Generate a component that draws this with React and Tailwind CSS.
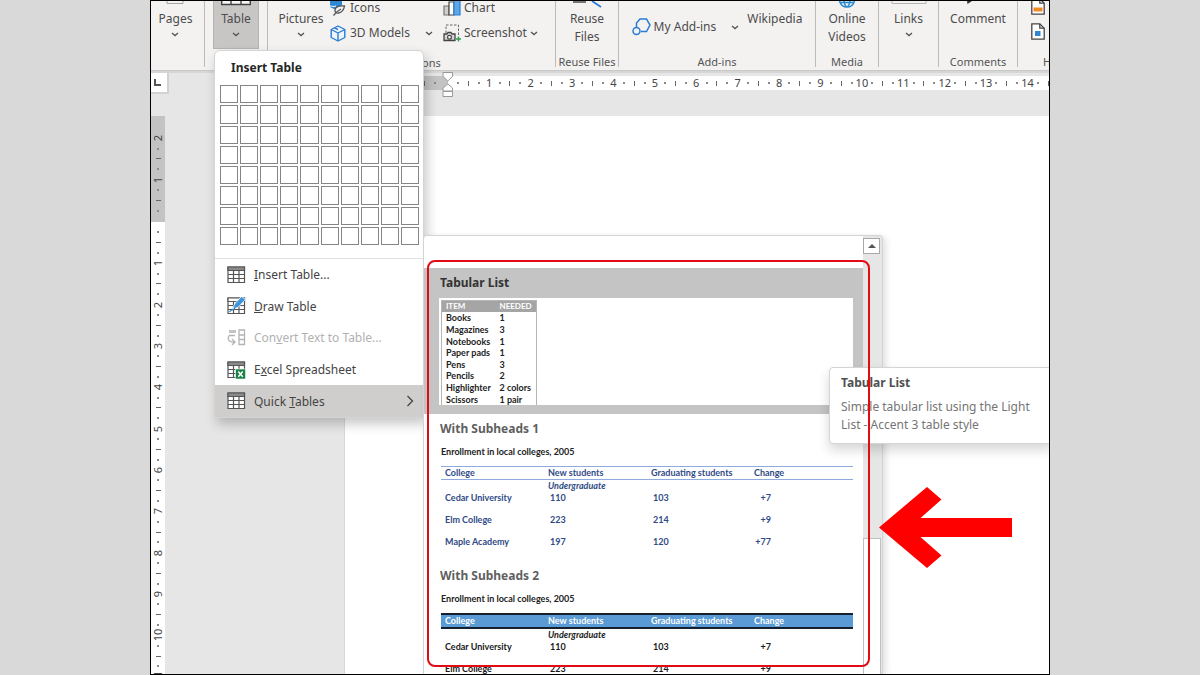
import React from "react";

const cx = (...parts) => parts.filter(Boolean).join(" ");

function Chevron({ className }) {
  return (
    <svg className={cx("h-[5px] w-2 shrink-0", className)} viewBox="0 0 8 5" fill="none" stroke="#555" strokeWidth="1.3">
      <path d="M1 1l3 2.6L7 1" />
    </svg>
  );
}

function Group({ className, label, children }) {
  return (
    <section className={cx("flex shrink-0 flex-col justify-between border-r border-[#bdbbb9]", className)}>
      <div className="flex justify-center">{children}</div>
      {label && <h2 className="text-center text-[11px] leading-[10px] whitespace-nowrap text-[#555]">{label}</h2>}
    </section>
  );
}

function BigButton({ art, lines, arrow, className }) {
  return (
    <button type="button" className={cx("flex flex-col items-center leading-[18px]", className)}>
      <span className="flex h-[9px] items-start">{art}</span>
      {lines.map((l) => (
        <span key={l}>{l}</span>
      ))}
      {arrow && <Chevron className="mt-1" />}
    </button>
  );
}

const PageEdge = () => (
  <svg className="h-[5px] w-[18px]" viewBox="0 0 18 5" fill="none" stroke="#a5a5a5"><path d="M1 0v2.500h16V0" /></svg>
);
const TableEdge = () => (
  <svg className="h-[5px] w-[30px]" viewBox="0 0 30 5" fill="#f6f6f6" stroke="#444" strokeWidth="1.400"><path d="M.7-2v5.500h28.600V-2M10 -2v5.500M20-2v5.500" /></svg>
);
const ReuseEdge = () => (
  <svg className="h-[7px] w-[32px]" viewBox="0 0 32 7" fill="none"><path d="M2 1h13" stroke="#555" strokeWidth="1.600" /><path d="M21 0l9 6" stroke="#2b7cd3" strokeWidth="1.800" /></svg>
);
const GlobeEdge = () => (
  <svg className="h-[7px] w-[18px]" viewBox="0 0 18 7" fill="none" stroke="#2b8ad0" strokeWidth="1.500"><path d="M1.500 0c1 3.500 4 6 7.500 6s6.500-2.500 7.500-6M6 0c.5 3 1.500 5.500 3 6 1.500-.5 2.500-3 3-6M2 1.500h14" /></svg>
);
const LinkEdge = () => (
  <svg className="h-[5px] w-[36px]" viewBox="0 0 36 5" fill="none" stroke="#b5b5b5"><path d="M1 0v2.500h34V0" /></svg>
);
const CommentEdge = () => (
  <svg className="mr-4 h-[5px] w-[8px]" viewBox="0 0 8 5" fill="#333"><path d="M1 0h5L1.500 3z" /></svg>
);

const IconsArt = () => (
  <svg className="h-[17px] w-4 shrink-0" viewBox="0 0 16 17">
    <path d="M0 2h12v4L6 11 0 8z" fill="#2f86d2" />
    <path d="M0 7c2 0 3 1 6 0" stroke="#fff" fill="none" />
    <path d="M14.500 7c-5-.5-9 1-9.500 4-.3 2 1.500 3.500 3.500 3 4-.8 5.500-3.500 6-7z" fill="#f3f2f1" stroke="#555" strokeWidth="1.300" />
    <path d="M3.500 16.500C6 13 8 11.500 11 10" stroke="#555" strokeWidth="1.300" fill="none" />
  </svg>
);
const CubeArt = () => (
  <svg className="h-[17px] w-4 shrink-0" viewBox="0 0 16 17" fill="none" stroke="#2b7cd3" strokeWidth="1.400" strokeLinejoin="round">
    <path d="M8 1l6.800 3.500v8L8 16l-6.800-3.500v-8z" fill="#eef6fd" />
    <path d="M1.200 4.500L8 8l6.800-3.500M8 8v8M4.500 2.800L8 4.500" />
  </svg>
);
const ChartArt = () => (
  <svg className="h-4 w-[18px] shrink-0" viewBox="0 0 18 16" strokeWidth="1.200">
    <path d="M1 6h5v9H1z" fill="#cfcfcf" stroke="#777" />
    <path d="M6 2h5v13H6z" fill="#fff" stroke="#444" />
    <path d="M11 0h6v15h-6z" fill="#5aa9e6" stroke="#2b7cd3" />
  </svg>
);
const CameraArt = () => (
  <svg className="h-[18px] w-[18px] shrink-0" viewBox="0 0 18 18" fill="none" stroke="#444">
    <path d="M3 9V1h12.500v11" strokeDasharray="2.500 1.500" stroke="#666" />
    <path d="M1 10h3l1-1.500h3L9 10h3v6.500H1z" strokeWidth="1.300" fill="#d5d5d5" />
    <circle cx="6.500" cy="13.200" r="1.900" fill="#fff" strokeWidth="1.200" />
    <path d="M15.500 12.500v5M13 15h5" stroke="#2e9e4f" strokeWidth="1.400" />
  </svg>
);
const AddinArt = () => (
  <svg className="h-[18px] w-[19px] shrink-0" viewBox="0 0 19 18" fill="none" stroke="#2b7cd3" strokeWidth="1.500">
    <path d="M4.500 9V5L8 1h6.500L18 7l-3.500 6.500H9" />
    <circle cx="4.500" cy="13" r="3.500" />
  </svg>
);
const DocArt = ({ kind }) => (
  <svg className="h-[17px] w-[14px]" viewBox="0 0 14 17" fill="#fff" stroke="#444" strokeWidth="1.300">
    <path d="M.8.8h8l4.400 4.400v11H.8z" />
    <path d="M8.800.8v4.400h4.400" fill="none" />
    {kind === "header" ? <path d="M2.500 9.500h9v4h-9z" fill="#f08a24" stroke="none" /> : <path d="M4 8h5.500v5H4z" fill="#2f86d2" stroke="none" />}
  </svg>
);

function GridIcon({ variant }) {
  if (variant === "convert")
    return (
      <svg className="h-[18px] w-[19px]" viewBox="0 0 19 18" fill="none" stroke="#b4b4b4" strokeWidth="1.300">
        <path d="M2 1h7v3H2z" fill="#c4c4c4" stroke="none" />
        <path d="M8 6.500H2.500C0 8.500 1 13.500 7.500 13M5 10l3 3-3 3" />
        <path d="M12 1h5.500v14.500H12zM12 6h5.500M12 10.500h5.500" />
      </svg>
    );
  return (
    <svg className="h-[18px] w-[19px]" viewBox="0 0 19 18" fill="none" stroke="#555" strokeWidth="1.200">
      <path d="M1 1h16.500v15.500H1z" fill="#fff" />
      <path d="M1 1h16.500v3.500H1z" fill={variant === "draw" ? "#fff" : "#8a8a8a"} />
      <path d="M1 8.500h16.500M1 12.500h16.500M6.500 4.500v12M12 4.500v12" />
      {variant === "draw" && (
        <>
          <path d="M6 12l1.500-5L14.500 -.5 18.500 2.500 11 10.500z" fill="#3f95dc" stroke="#fff" strokeWidth=".8" />
          <path d="M2.500 15c2-3.500 3-.5 5.500-4" stroke="#2b7cd3" />
        </>
      )}
      {variant === "excel" && (
        <>
          <path d="M8.500 8h10v10h-10z" fill="#168345" stroke="#fff" strokeWidth=".6" />
          <path d="M11.300 10.500l4.400 5.200M15.700 10.500l-4.400 5.200" stroke="#fff" strokeWidth="1.500" />
        </>
      )}
    </svg>
  );
}

function Ribbon() {
  return (
    <header className="flex h-[70px] w-full shrink-0 border-b border-[#c9c9c9] bg-[#f3f2f1] pb-[3px] text-[12px] text-[#4c4c4c]">
      <Group className="w-[54px] pr-1">
        <BigButton art={<PageEdge />} lines={["Pages"]} arrow />
      </Group>
      <Group className="w-[63px]">
        <BigButton art={<TableEdge />} lines={["Table"]} arrow className="h-12 w-[46px] border border-t-0 border-[#b5b3b1] bg-[#c8c6c4]" />
      </Group>
      <Group className="w-[288px]">
        <div className="flex grow gap-1.5 pl-2.5">
          <BigButton lines={["Pictures"]} arrow className="w-[46px]" />
          <div className="flex w-[107px] flex-col gap-[11px]">
            <button type="button" className="flex h-[13px] items-center gap-1 leading-[13px]"><IconsArt />Icons</button>
            <button type="button" className="flex h-4 w-[103px] items-center gap-1"><CubeArt />3D Models<Chevron className="ml-auto" /></button>
          </div>
          <div className="flex flex-col gap-[11px]">
            <button type="button" className="flex h-[13px] items-center gap-[3px] leading-[13px]"><ChartArt />Chart</button>
            <button type="button" className="flex h-4 items-center gap-[3px]"><CameraArt />Screenshot<Chevron /></button>
          </div>
        </div>
      </Group>
      <Group className="w-[63px]" label="Reuse Files">
        <BigButton art={<ReuseEdge />} lines={["Reuse", "Files"]} />
      </Group>
      <Group className="w-[197px]" label="Add-ins">
        <button type="button" className="flex h-[52px] items-center gap-[3px] whitespace-nowrap"><AddinArt />My Add-ins<Chevron className="ml-3" /></button>
        <BigButton lines={["Wikipedia"]} className="ml-2" />
      </Group>
      <Group className="w-[63px]" label="Media">
        <BigButton art={<GlobeEdge />} lines={["Online", "Videos"]} />
      </Group>
      <Group className="w-[60px]">
        <BigButton art={<LinkEdge />} lines={["Links"]} arrow />
      </Group>
      <Group className="w-[79px]" label="Comments">
        <BigButton art={<CommentEdge />} lines={["Comment"]} />
      </Group>
      <section className="flex flex-1 flex-col justify-between overflow-hidden pl-[13px]">
        <div className="flex flex-col gap-2">
          <button type="button" aria-label="Header" className="flex h-[14px] items-end"><DocArt kind="header" /></button>
          <button type="button" aria-label="Footer"><DocArt /></button>
        </div>
        <h2 className="pl-3 text-[11px] leading-[10px] whitespace-nowrap text-[#555]">Header &amp; Footer</h2>
      </section>
    </header>
  );
}

const dot = "size-[2px] bg-[#8a8a8a]";

function HRulerUnit({ n }) {
  return (
    <div className="grid flex-1 grid-cols-4 items-center justify-items-center">
      <i className={dot} />
      <i className="h-[5px] w-px bg-[#666]" />
      <i className={dot} />
      <span>{n}</span>
    </div>
  );
}

function VRulerUnit({ n, above }) {
  const num = <span className="-rotate-90">{n}</span>;
  return (
    <div className="grid h-full flex-1 grid-rows-4 items-center justify-items-center leading-[10px]">
      {above && num}
      <i className={dot} />
      <i className="h-px w-[5px] bg-[#666]" />
      <i className={dot} />
      {!above && num}
    </div>
  );
}

function Workspace() {
  return (
    <main className="flex min-h-0 flex-1 flex-col bg-[#e6e6e6] text-[11px] leading-[14px] text-[#444]">
      <div className="flex h-[45px] shrink-0 items-start border-t-2 border-[#d6d6d6]">
        <button type="button" aria-label="Tab stop" className="flex h-[21px] w-[18px] items-center justify-center border-r-2 border-b-2 border-[#d2d2d2] bg-white pr-1">
          <i className="size-[7px] border-b-2 border-l-2 border-[#555]" />
        </button>
        <div className="mt-[3px] ml-[175px] h-[14px] w-[104px] shrink-0 bg-[#c3c3c3]">
          <div className="flex h-full items-center justify-end gap-[9px] pr-3"><i className="h-[5px] w-px bg-[#666]" /><i className={dot} /></div>
        </div>
        <div className="relative mt-[3px] h-[14px] min-w-0 flex-1 bg-white">
          <div className="h-full overflow-hidden pl-[5px]">
            <div className="flex h-full w-[621px]">
              {Array.from({ length: 15 }, (_, i) => <HRulerUnit key={i} n={i + 1} />)}
            </div>
          </div>
          <svg className="absolute -top-1 -left-[6px] h-[26px] w-[12px]" viewBox="0 0 12 26" fill="#fff" stroke="#999">
            <path d="M1 .5h9.500v4L5.800 9 1 4.500zM5.800 12l4.700 4v3H1v-3zM1 19.500h9.500v5H1z" />
          </svg>
        </div>
      </div>
      <div className="flex min-h-0 flex-1 justify-between">
        <div className="flex w-[14px] shrink-0 flex-col bg-white">
          <div className="flex h-[106px] shrink-0 flex-col justify-end bg-[#c3c3c3] pb-[6px]">
            <div className="flex h-[83px] flex-col"><VRulerUnit n={2} above /><VRulerUnit n={1} above /></div>
          </div>
          <div className="min-h-0 flex-1 overflow-hidden pt-[5px]">
            <div className="flex h-[455px] flex-col">
              {Array.from({ length: 11 }, (_, i) => <VRulerUnit key={i} n={i + 1} />)}
            </div>
          </div>
        </div>
        <div className="ml-[179px] flex-1 border-l border-[#d8d8d8] bg-white" />
      </div>
    </main>
  );
}

function MenuItem({ icon, children, disabled, active, arrow }) {
  return (
    <button type="button" role="menuitem" disabled={disabled} className={cx("flex w-full flex-1 items-center gap-2 px-3 text-left", disabled ? "text-[#b1b1b1]" : "text-[#444]", active && "bg-[#d0cecc]")}>
      <GridIcon variant={icon} />
      <span className="flex-1 pt-px">{children}</span>
      {arrow && <svg className="-mr-[3px] h-3 w-2" viewBox="0 0 8 12" fill="none" stroke="#444" strokeWidth="1.300"><path d="M1.500 1l5 5-5 5" /></svg>}
    </button>
  );
}

function TableMenu() {
  return (
    <div role="menu" className="absolute top-[49px] left-[63px] z-10 w-[210px] rounded-t-md border border-[#d4d4d4] bg-white text-[12px] shadow-[3px_6px_12px_rgba(0,0,0,0.22)]">
      <h2 className="px-4 pt-2 pb-2 leading-[18px] font-bold text-[#262626]">Insert Table</h2>
      <div className="mr-1 ml-[5px] grid h-[160px] grid-cols-10 grid-rows-8 gap-[2px]">
        {Array.from({ length: 80 }, (_, i) => (
          <button key={i} type="button" aria-label={`${(i % 10) + 1} by ${Math.floor(i / 10) + 1}`} className="border border-[#858585]" />
        ))}
      </div>
      <div className="mt-[13px] flex h-[159px] flex-col border-t border-[#e1e1e1]">
        <MenuItem><u>I</u>nsert Table...</MenuItem>
        <MenuItem icon="draw"><u>D</u>raw Table</MenuItem>
        <MenuItem icon="convert" disabled>Con<u>v</u>ert Text to Table...</MenuItem>
        <MenuItem icon="excel">E<u>x</u>cel Spreadsheet</MenuItem>
        <MenuItem active arrow>Quick <u>T</u>ables</MenuItem>
      </div>
    </div>
  );
}

const items = [["Books", "1"], ["Magazines", "3"], ["Notebooks", "1"], ["Paper pads", "1"], ["Pens", "3"], ["Pencils", "2"], ["Highlighter", "2 colors"], ["Scissors", "1 pair"]];
const colleges = [["Cedar University", "110", "103", "+7"], ["Elm College", "223", "214", "+9"], ["Maple Academy", "197", "120", "+77"]];

function Subheads({ title, dark }) {
  return (
    <section className="pr-2.5 pl-[17px]">
      <h3 className="-ml-px pt-[6px] text-[12px] leading-[18px] font-bold text-[#5f5f5f]">{title}</h3>
      <div className="font-[Lato,sans-serif] text-[9px] font-bold">
        <p className="py-2 leading-3 text-[#222]">Enrollment in local colleges, 2005</p>
        <table className={cx("w-full table-fixed border-collapse text-left", dark ? "text-[#1a1a1a]" : "text-[#2f4a86]")}>
          <thead>
            <tr className={dark ? "h-3.5 border-y-2 border-[#14202e] bg-[#5b9bd5] text-white" : "h-[13px] border-y border-[#8faadc]"}>
              <th className="p-0 pl-1 leading-3">College</th>
              <th className="p-0 pl-1 leading-3">New students</th>
              <th className="p-0 pl-1 leading-3">Graduating students</th>
              <th className="p-0 pl-1 leading-3">Change</th>
            </tr>
          </thead>
          <tbody>
            <tr className="h-3 leading-3 italic"><td className="p-0" /><td className="p-0 pl-1">Undergraduate</td><td className="p-0" /><td className="p-0" /></tr>
            {colleges.map(([name, a, b, c]) => (
              <tr key={name} className="h-[22px] align-top leading-3">
                <td className="p-0 pl-1">{name}</td>
                <td className="p-0 pl-1.5">{a}</td>
                <td className="p-0 pl-1.5">{b}</td>
                <td className="p-0"><span className="block w-[21px] text-right">{c}</span></td>
              </tr>
            ))}
          </tbody>
        </table>
      </div>
    </section>
  );
}

function Gallery() {
  return (
    <div className="absolute top-[234px] bottom-0 left-[272px] z-10 flex w-[460px] overflow-hidden rounded-t border border-b-0 border-[#d4d4d4] bg-white shadow-[3px_2px_6px_rgba(0,0,0,0.12)]">
      <div className="min-w-0 flex-1 overflow-hidden pt-8">
        <section className="h-[146px] bg-[#c4c4c4] pr-2.5 pb-[9px] pl-[15px]">
          <h3 className="pt-[6px] pb-[6px] pl-px text-[12px] leading-[18px] font-bold text-[#333]">Tabular List</h3>
          <div className="h-[107px] overflow-hidden bg-white pt-[2px] pl-[2px]">
            <table className="h-[106px] w-[96px] table-fixed border-collapse border border-[#b5b5b5] text-left font-[Lato,sans-serif] text-[9px] leading-[11px] font-bold text-[#222]">
              <thead>
                <tr className="bg-[#a5a5a5] text-[8px] text-white"><th className="w-[54px] p-0 pl-1">ITEM</th><th className="p-0 pl-1">NEEDED</th></tr>
              </thead>
              <tbody>
                {items.map(([a, b]) => <tr key={a}><td className="p-0 pl-1">{a}</td><td className="p-0 pl-1 whitespace-nowrap">{b}</td></tr>)}
              </tbody>
            </table>
          </div>
        </section>
        <Subheads title="With Subheads 1" />
        <div className="h-[3px]" />
        <Subheads title="With Subheads 2" dark />
      </div>
      <div className="flex w-[19px] shrink-0 flex-col bg-[#e6e6e6] pt-[2px] pr-px">
        <button type="button" aria-label="Scroll up" className="flex h-4 w-[17px] shrink-0 items-center justify-center border border-[#a8a8a8] bg-white">
          <svg className="h-1 w-2" viewBox="0 0 8 4" fill="#555"><path d="M4 0l4 4H0z" /></svg>
        </button>
        <div className="mt-[284px] flex-1 border border-b-0 border-[#c0c0c0] bg-white" />
      </div>
    </div>
  );
}

export default function App() {
  return (
    <div className="flex h-screen justify-center bg-[#d9d9d9] font-['Noto_Sans','Open_Sans',sans-serif]">
      <div className="relative flex w-3/4 flex-col overflow-hidden border border-black">
        <Ribbon />
        <Workspace />
        <h2 className="absolute top-[56px] left-[271px] text-[11px] leading-3 text-[#555]">ons</h2>
        <TableMenu />
        <Gallery />
        <div role="tooltip" className="absolute top-[366px] -right-1 z-20 w-[224px] rounded border border-[#d4d4d4] bg-white pt-[6px] pr-2 pb-[9px] pl-[11px] text-[12px] leading-[18px] text-[#757575] shadow-[0_6px_12px_rgba(0,0,0,0.16)]">
          <h3 className="pb-[6px] font-bold text-[#505050]">Tabular List</h3>
          <p>Simple tabular list using the Light<br />List - Accent 3 table style</p>
        </div>
        <div className="absolute top-[259px] left-[276px] z-30 h-[407px] w-[443px] rounded-lg border-2 border-[#e30b13]" />
        <svg className="absolute top-[485px] left-[728px] z-30 h-[84px] w-[134px]" viewBox="0 0 134 84" fill="#fe0000">
          <path d="M0 41.500L48 1l14.500 12.500L41.500 32H133v19H41.500l21 18.500L48 82z" />
        </svg>
      </div>
    </div>
  );
}
